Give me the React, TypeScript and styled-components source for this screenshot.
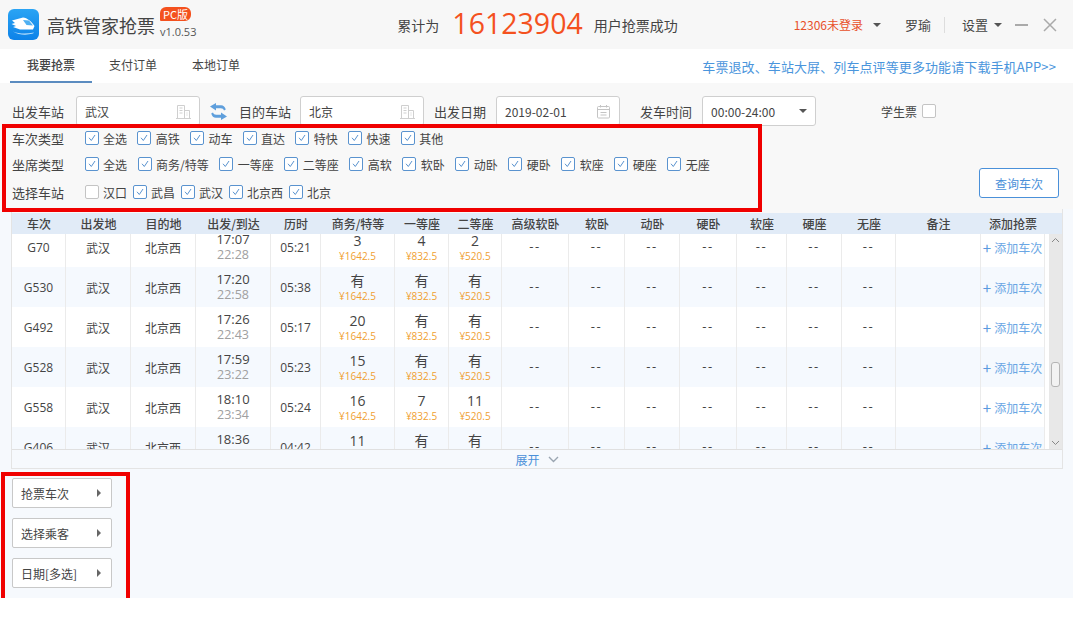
import styled, { createGlobalStyle } from "styled-components";

const GlobalStyle = createGlobalStyle`
  html, body {
    margin: 0;
    padding: 0;
    background: #fff;
  }
  * {
    box-sizing: border-box;
  }
`;

const COLUMNS = "54px 65px 65px 75px 50px 74px 54px 53px 67px 56px 55px 57px 50px 55px 54px 85px 64px";
const CJK = `"Noto Sans CJK SC", "Noto Sans", sans-serif`;
const LATIN = `"Open Sans", "Noto Sans CJK SC", sans-serif`;

const Page = styled.div`
  position: relative;
  width: 1073px;
  height: 621px;
  overflow: hidden;
  background: #fff;
  font-family: ${LATIN};
  font-size: 12px;
  color: #444;
`;

/* top bar */
const TopBar = styled.div`
  height: 49px;
  background: #f7f7f7;
  display: flex;
  align-items: center;
  padding: 0 15px 0 8px;
  white-space: nowrap;
`;
const Brand = styled.div`
  display: flex;
  align-items: center;
  width: 390px;
`;
const AppName = styled.div`
  font-family: ${CJK};
  font-size: 18px;
  color: #444;
  margin-left: 8px;
  width: 113px;
`;
const BrandMeta = styled.div`
  display: flex;
  flex-direction: column;
  align-items: flex-start;
  gap: 4px;
  margin-bottom: 5px;
`;
const VersionBadge = styled.span`
  background: #f4511e;
  color: #fff;
  font-family: ${CJK};
  font-size: 11px;
  line-height: 14px;
  height: 14px;
  padding: 0 3px;
  border-radius: 6px 6px 6px 1px;
`;
const Version = styled.span`
  font-size: 11px;
  line-height: 13px;
  color: #555;
`;
const Summary = styled.div`
  display: flex;
  align-items: center;
  font-family: ${CJK};
  font-size: 14px;
  color: #444;
  width: 397px;
`;
const BigCount = styled.span`
  font-family: ${LATIN};
  font-size: 28.5px;
  color: #f4511e;
  margin: 0 11px 0 13px;
  line-height: 30px;
  position: relative;
  top: -2px;
`;
const LoginState = styled.span`
  font-family: ${CJK};
  font-size: 12px;
  color: #e8502a;
`;
const Caret = styled.i<{ $gap: number }>`
  width: 0;
  height: 0;
  border: 4px solid transparent;
  border-top: 4px solid #555;
  border-bottom: 0;
  margin-left: ${(p) => p.$gap}px;
`;
const MenuText = styled.span<{ $gap: number }>`
  font-family: ${CJK};
  font-size: 13px;
  color: #444;
  margin-left: ${(p) => p.$gap}px;
`;
const Divider = styled.i`
  width: 1px;
  height: 16px;
  background: #ddd;
  margin: 0 17px 0 13px;
`;
const WinIcon = styled.svg`
  display: block;
  margin-left: 13px;
`;

/* tabs */
const TabBar = styled.div`
  height: 34px;
  background: #fff;
  display: flex;
  align-items: stretch;
  padding: 0 17px 0 10px;
`;
const Tab = styled.div<{ $active?: boolean }>`
  width: 82px;
  margin-right: ${(p) => (p.$active ? 0 : 1)}px;
  font-family: ${CJK};
  font-size: 12px;
  font-weight: ${(p) => (p.$active ? 500 : 400)};
  color: #444;
  display: flex;
  align-items: center;
  justify-content: center;
  padding-bottom: 2px;
  border-bottom: 2px solid ${(p) => (p.$active ? "#5b8cc0" : "transparent")};
`;
const AppLink = styled.div`
  margin-left: auto;
  align-self: center;
  font-family: ${CJK};
  font-size: 13px;
  letter-spacing: 0.1px;
  color: #4a95dc;
  white-space: nowrap;
`;

/* filters */
const FilterPanel = styled.div`
  position: relative;
  height: 126px;
  background: #f8f8f8;
  padding: 13px 0 0 12px;
`;
const FormRow = styled.div`
  display: flex;
  align-items: center;
  height: 30px;
  margin-bottom: -1px;
`;
const FieldLabel = styled.span<{ $gap: number; $small?: boolean }>`
  font-family: ${CJK};
  font-size: ${(p) => (p.$small ? 12 : 13)}px;
  color: #444;
  margin-right: ${(p) => p.$gap}px;
  white-space: nowrap;
`;
const Field = styled.div<{ $width: number; $mr: number }>`
  width: ${(p) => p.$width}px;
  height: 30px;
  margin-right: ${(p) => p.$mr}px;
  background: #fff;
  border: 1px solid #cfcfcf;
  border-radius: 3px;
  display: flex;
  align-items: center;
  justify-content: space-between;
  padding: 0 8px;
  font-size: 12px;
  font-family: ${CJK};
  color: #444;
`;
const SwapWrap = styled.div`
  width: 39px;
  padding-left: 10px;
  display: flex;
  align-items: center;
`;
const OptionRow = styled.div<{ $h: number }>`
  display: flex;
  align-items: center;
  height: ${(p) => p.$h}px;
`;
const RowTitle = styled.span`
  width: 72.5px;
  font-family: ${CJK};
  font-size: 13px;
  color: #444;
`;
const Option = styled.label<{ $gap: number }>`
  display: flex;
  align-items: center;
  margin-right: ${(p) => p.$gap}px;
  font-family: ${CJK};
  font-size: 12px;
  color: #444;
  white-space: nowrap;
`;
const Box = styled.span<{ $checked?: boolean }>`
  width: 14px;
  height: 14px;
  margin-right: 4.5px;
  border-radius: 2px;
  background: #fff;
  border: 1px solid ${(p) => (p.$checked ? "#5a93cf" : "#c4c4c4")};
  display: flex;
  align-items: center;
  justify-content: center;
  flex-shrink: 0;
`;
const SearchButton = styled.button`
  position: absolute;
  left: 979px;
  top: 85px;
  width: 80px;
  height: 30px;
  background: #fff;
  border: 1px solid #4a90d9;
  border-radius: 3px;
  font-family: ${CJK};
  font-size: 12px;
  color: #4a90d9;
  padding: 0;
`;

/* table */
const Content = styled.div`
  height: 389px;
  background: #f6f9fd;
  padding: 0 10px 0 11px;
`;
const TableFrame = styled.div`
  height: 260px;
  border: 1px solid #e4e4e4;
  border-top: 0;
  padding-top: 4px;
  background: linear-gradient(#f8f8f8 4px, #fff 4px);
`;
const HeadRow = styled.div`
  display: grid;
  grid-template-columns: ${COLUMNS} 1fr;
  height: 21px;
  background: #e1ebf7;
  font-family: ${CJK};
  font-size: 12px;
  font-weight: 500;
  color: #444;
`;
const HeadCell = styled.div`
  display: flex;
  align-items: center;
  justify-content: center;
  white-space: nowrap;
`;
const BodyArea = styled.div`
  display: flex;
  height: 216px;
  overflow: hidden;
  border-bottom: 1px solid #e0e0e0;
`;
const RowsClip = styled.div`
  flex: 1;
  overflow: hidden;
`;
const Rows = styled.div`
  margin-top: -7px;
`;
const Row = styled.div<{ $alt: boolean }>`
  display: grid;
  grid-template-columns: ${COLUMNS};
  width: 1033px;
  height: 40px;
  background: ${(p) => (p.$alt ? "#f5f9fe" : "#fff")};
`;
const Cell = styled.div`
  display: flex;
  flex-direction: column;
  align-items: center;
  justify-content: center;
  border-right: 1px solid #ebebeb;
  font-family: ${LATIN};
  font-size: 12px;
  color: #444;
  white-space: nowrap;
  line-height: 15px;
`;
const PlaceCell = styled(Cell)`
  font-family: ${CJK};
`;
const SeatCell = styled(Cell)`
  padding-top: 2px;
`;
const Dashes = styled.span`
  font-size: 13px;
  letter-spacing: 1.5px;
  padding-bottom: 2px;
  color: #444;
`;
const Depart = styled.span`
  font-size: 13px;
  line-height: 15px;
  color: #444;
`;
const Arrive = styled.span`
  font-size: 12.5px;
  line-height: 15px;
  color: #a0a0a0;
`;
const SeatCount = styled.span`
  font-size: 14px;
  line-height: 15px;
  color: #444;
`;
const Price = styled.span`
  font-size: 10px;
  line-height: 14px;
  margin-top: 1px;
  color: #f0a030;
`;
const AddLink = styled.span`
  display: flex;
  align-items: center;
  font-family: ${CJK};
  font-size: 12px;
  color: #6aa6e4;
`;
const Plus = styled.span`
  font-size: 15px;
  line-height: 15px;
  margin-right: 3px;
  color: #5a9ae0;
`;
const Scrollbar = styled.div`
  position: relative;
  width: 13px;
  background: #e8e8e8;
  display: flex;
  flex-direction: column;
  justify-content: space-between;
  align-items: center;
  padding: 3px 0;
`;
const Thumb = styled.div`
  position: absolute;
  left: 2px;
  top: 128px;
  width: 9px;
  height: 25px;
  background: #f2f2f2;
  border: 1px solid #b4b4b4;
  border-radius: 3px;
`;
const ExpandBar = styled.div`
  height: 18px;
  background: #f6f9fd;
  display: flex;
  align-items: center;
  justify-content: center;
  gap: 8px;
  font-family: ${CJK};
  font-size: 12px;
  color: #4a90d9;
`;

/* left stack */
const SideList = styled.div`
  display: flex;
  flex-direction: column;
  gap: 10px;
  padding: 9px 0 0 1px;
`;
const SideButton = styled.div`
  width: 100px;
  height: 30px;
  background: #fff;
  border: 1px solid #c8c8c8;
  border-radius: 2px;
  display: flex;
  align-items: center;
  justify-content: space-between;
  padding: 0 10px 0 8px;
  font-family: ${CJK};
  font-size: 12px;
  color: #444;
`;
const SideArrow = styled.i`
  width: 0;
  height: 0;
  border: 4px solid transparent;
  border-left: 4px solid #666;
  border-right: 0;
`;

/* red marks painted on the screenshot */
const RedMark = styled.div<{ $l: number; $t: number; $w: number; $h: number; $open?: boolean }>`
  position: absolute;
  left: ${(p) => p.$l}px;
  top: ${(p) => p.$t}px;
  width: ${(p) => p.$w}px;
  height: ${(p) => p.$h}px;
  border: 4px solid #f00000;
  border-bottom-width: ${(p) => (p.$open ? 0 : 4)}px;
  pointer-events: none;
`;

function Logo() {
  return (
    <svg width="31" height="31" viewBox="0 0 31 31">
      <defs>
        <linearGradient id="lg" x1="0" y1="0" x2="0" y2="1">
          <stop offset="0" stopColor="#2aa4f4" />
          <stop offset="1" stopColor="#0d82e8" />
        </linearGradient>
      </defs>
      <rect width="31" height="31" rx="6" fill="url(#lg)" />
      <path d="M4 11.5 L15 8.5 C19 8.5 24 13 26.5 17 L25 20.5 L12 20.5 L5 18 L8 17 L3.5 15 L7 14 Z" fill="#fff" />
      <path d="M15 11 L21 11.5 L25 16.5 L18.5 16 Z" fill="#4fb0f2" />
      <path d="M5 22.5 C11 25 19 25 26 23.5 L25 24.5 C18 26.5 11 26 5 22.5 Z" fill="#bfe2fb" />
    </svg>
  );
}

function Building() {
  return (
    <svg width="15" height="15" viewBox="0 0 15 15" fill="none" stroke="#cfcfcf" strokeWidth="1">
      <path d="M1.5 14.5 V1.5 H8.5 V14.5 M8.5 6.5 H13.5 V14.5 M0 14.5 H15" />
      <path d="M3.5 4 H6.5 M3.5 6.5 H6.5 M3.5 9 H6.5 M10.5 9 H11.5 M10.5 11 H11.5" />
    </svg>
  );
}

function CalendarIcon() {
  return (
    <svg width="15" height="15" viewBox="0 0 15 15" fill="none" stroke="#c4c4c4" strokeWidth="1">
      <rect x="1.5" y="2.5" width="12" height="11.5" rx="1" />
      <path d="M1.5 5.5 H13.5 M4.5 1 V3.5 M10.5 1 V3.5 M4.5 8.5 H10.5 M4.5 11 H10.5" />
    </svg>
  );
}

function SwapIcon() {
  return (
    <svg width="17" height="17" viewBox="0 0 17 17" fill="#5f9fdc">
      <path d="M0 3.5 L6 0 V2.2 H11 C13.5 2.2 15 3.8 15.8 6.6 L14 7.4 C13.4 6 12.5 5.2 10.8 5.2 H6 V7.5 Z" />
      <path d="M17 13.5 L11 17 V14.8 H6 C3.5 14.8 2 13.2 1.2 10.4 L3 9.6 C3.6 11 4.5 11.8 6.2 11.8 H11 V9.5 Z" />
    </svg>
  );
}

function Check({ label, checked = true, gap }: { label: string; checked?: boolean; gap: number }) {
  return (
    <Option $gap={gap}>
      <Box $checked={checked}>
        {checked && (
          <svg width="10" height="10" viewBox="0 0 10 10" fill="none" stroke="#5a93cf" strokeWidth="1">
            <path d="M2 4.8 L4.3 7.5 L8 2" />
          </svg>
        )}
      </Box>
      {label}
    </Option>
  );
}

const trainTypes = ["全选", "高铁", "动车", "直达", "特快", "快速", "其他"];
const seatTypes = ["全选", "商务/特等", "一等座", "二等座", "高软", "软卧", "动卧", "硬卧", "软座", "硬座", "无座"];
const stations = [
  { name: "汉口", on: false },
  { name: "武昌", on: true },
  { name: "武汉", on: true },
  { name: "北京西", on: true },
  { name: "北京", on: true },
];
const headers = [
  "车次", "出发地", "目的地", "出发/到达", "历时", "商务/特等", "一等座", "二等座", "高级软卧",
  "软卧", "动卧", "硬卧", "软座", "硬座", "无座", "备注", "添加抢票",
];
const trains = [
  ["G70", "17:07", "22:28", "05:21", "3", "4", "2"],
  ["G530", "17:20", "22:58", "05:38", "有", "有", "有"],
  ["G492", "17:26", "22:43", "05:17", "20", "有", "有"],
  ["G528", "17:59", "23:22", "05:23", "15", "有", "有"],
  ["G558", "18:10", "23:34", "05:24", "16", "7", "11"],
  ["G406", "18:36", "23:18", "04:42", "11", "有", "有"],
];
const prices = ["¥1642.5", "¥832.5", "¥520.5"];

export default function App() {
  return (
    <Page>
      <GlobalStyle />
      <TopBar>
        <Brand>
          <Logo />
          <AppName>高铁管家抢票</AppName>
          <BrandMeta>
            <VersionBadge>PC版</VersionBadge>
            <Version>v1.0.53</Version>
          </BrandMeta>
        </Brand>
        <Summary>
          累计为<BigCount>16123904</BigCount>用户抢票成功
        </Summary>
        <LoginState>12306未登录</LoginState>
        <Caret $gap={10} />
        <MenuText $gap={24}>罗瑜</MenuText>
        <Divider />
        <MenuText $gap={0}>设置</MenuText>
        <Caret $gap={6} />
        <WinIcon width="14" height="14" viewBox="0 0 14 14">
          <path d="M0 7 H13" stroke="#aaa" strokeWidth="2" />
        </WinIcon>
        <WinIcon width="16" height="16" viewBox="0 0 16 16">
          <path d="M2 2 L14 14 M14 2 L2 14" stroke="#aaa" strokeWidth="1.5" />
        </WinIcon>
      </TopBar>

      <TabBar>
        <Tab $active>我要抢票</Tab>
        <Tab>支付订单</Tab>
        <Tab>本地订单</Tab>
        <AppLink>车票退改、车站大屏、列车点评等更多功能请下载手机APP&gt;&gt;</AppLink>
      </TabBar>

      <FilterPanel>
        <FormRow>
          <FieldLabel $gap={12}>出发车站</FieldLabel>
          <Field $width={124} $mr={0}>武汉<Building /></Field>
          <SwapWrap><SwapIcon /></SwapWrap>
          <FieldLabel $gap={9}>目的车站</FieldLabel>
          <Field $width={124} $mr={10}>北京<Building /></Field>
          <FieldLabel $gap={10}>出发日期</FieldLabel>
          <Field $width={124} $mr={20}>2019-02-01<CalendarIcon /></Field>
          <FieldLabel $gap={10}>发车时间</FieldLabel>
          <Field $width={114} $mr={65}>00:00-24:00<Caret $gap={0} /></Field>
          <FieldLabel $gap={5} $small>学生票</FieldLabel>
          <Box />
        </FormRow>
        <OptionRow $h={26}>
          <RowTitle>车次类型</RowTitle>
          {trainTypes.map((t) => (
            <Check key={t} label={t} gap={10.2} />
          ))}
        </OptionRow>
        <OptionRow $h={26}>
          <RowTitle>坐席类型</RowTitle>
          {seatTypes.map((t) => (
            <Check key={t} label={t} gap={10.5} />
          ))}
        </OptionRow>
        <OptionRow $h={30}>
          <RowTitle>选择车站</RowTitle>
          {stations.map((s) => (
            <Check key={s.name} label={s.name} checked={s.on} gap={5.5} />
          ))}
        </OptionRow>
        <SearchButton>查询车次</SearchButton>
      </FilterPanel>

      <Content>
        <TableFrame>
          <HeadRow>
            {headers.map((h) => (
              <HeadCell key={h}>{h}</HeadCell>
            ))}
          </HeadRow>
          <BodyArea>
            <RowsClip>
              <Rows>
                {trains.map((t, i) => (
                  <Row key={t[0]} $alt={i % 2 === 1}>
                    <Cell>{t[0]}</Cell>
                    <PlaceCell>武汉</PlaceCell>
                    <PlaceCell>北京西</PlaceCell>
                    <Cell>
                      <Depart>{t[1]}</Depart>
                      <Arrive>{t[2]}</Arrive>
                    </Cell>
                    <Cell>{t[3]}</Cell>
                    {[t[4], t[5], t[6]].map((seat, j) => (
                      <SeatCell key={j}>
                        <SeatCount>{seat}</SeatCount>
                        <Price>{prices[j]}</Price>
                      </SeatCell>
                    ))}
                    {Array.from({ length: 7 }).map((_, j) => (
                      <Cell key={j}>
                        <Dashes>--</Dashes>
                      </Cell>
                    ))}
                    <Cell />
                    <Cell>
                      <AddLink>
                        <Plus>+</Plus>添加车次
                      </AddLink>
                    </Cell>
                  </Row>
                ))}
              </Rows>
            </RowsClip>
            <Scrollbar>
              <svg width="9" height="6" viewBox="0 0 9 6" fill="none" stroke="#888">
                <path d="M1 5 L4.5 1.5 L8 5" />
              </svg>
              <Thumb />
              <svg width="9" height="6" viewBox="0 0 9 6" fill="none" stroke="#888">
                <path d="M1 1 L4.5 4.5 L8 1" />
              </svg>
            </Scrollbar>
          </BodyArea>
          <ExpandBar>
            展开
            <svg width="11" height="7" viewBox="0 0 11 7" fill="none" stroke="#9aa5b1" strokeWidth="1.4">
              <path d="M1 1 L5.5 5.5 L10 1" />
            </svg>
          </ExpandBar>
        </TableFrame>
        <SideList>
          {["抢票车次", "选择乘客", "日期[多选]"].map((s) => (
            <SideButton key={s}>
              {s}
              <SideArrow />
            </SideButton>
          ))}
        </SideList>
      </Content>

      <RedMark $l={2} $t={124} $w={760} $h={88} />
      <RedMark $l={1} $t={472} $w={129} $h={126} $open />
    </Page>
  );
}
